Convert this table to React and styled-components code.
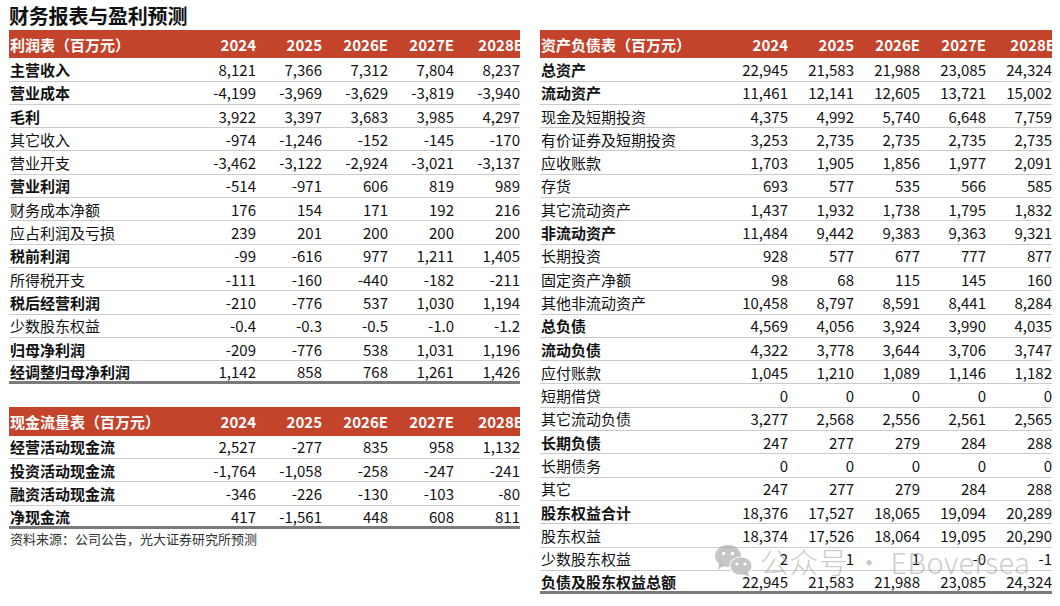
import React from "react";
import styled, { createGlobalStyle } from "styled-components";

const Global = createGlobalStyle`
  html, body { margin: 0; padding: 0; background: #fff; }
  body { font-family: "Noto Sans CJK SC", "Noto Sans", sans-serif; color: #111; }
`;

const Page = styled.div`
  position: relative;
  width: 1060px;
  height: 606px;
  box-sizing: border-box;
  padding: 3px 8px 0 9px;
  overflow: hidden;
`;

const Title = styled.h1`
  margin: 0;
  height: 27px;
  font-size: 20px;
  line-height: 26px;
  font-weight: 700;
  letter-spacing: -0.2px;
`;

const Columns = styled.div`
  display: flex;
  gap: 20px;
  align-items: flex-start;
`;

const Column = styled.div`
  display: flex;
  flex-direction: column;
  width: ${(p) => p.$w}px;
`;

const Table = styled.div`
  display: flex;
  flex-direction: column;
  margin-bottom: ${(p) => p.$mb || 0}px;
`;

const HeaderRow = styled.div`
  display: grid;
  grid-template-columns: 1fr repeat(5, 66px);
  height: 28.3px;
  align-items: center;
  background: #c4432b;
  color: #fff;
  font-weight: 700;
  font-size: 15px;
  overflow: hidden;
  white-space: nowrap;
`;

const HeadLabel = styled.div`
  padding-left: 1px;
`;

const HeadNum = styled.div`
  text-align: right;
  margin-right: ${(p) => (p.$last ? -3 : 0)}px;
`;

const Row = styled.div`
  display: grid;
  grid-template-columns: 1fr repeat(5, 66px);
  box-sizing: border-box;
  height: 23.3px;
  align-items: center;
  border-bottom: 1px solid #cbcbcb;
  font-size: 15px;
  white-space: nowrap;
  &:first-of-type { height: 25.7px; }
  &:last-child { border-bottom: 3px solid #7b7b7b; }
`;

const Label = styled.div`
  padding-left: 1px;
  font-weight: ${(p) => (p.$bold ? 700 : 400)};
`;

const Num = styled.div`
  text-align: right;
`;

const Note = styled.div`
  margin-top: 1px;
  font-size: 13px;
  line-height: 17px;
  color: #333;
  padding-left: 1px;
`;

const Watermark = styled.div`
  position: absolute;
  left: 714px;
  top: 543px;
  display: flex;
  align-items: center;
  gap: 6px;
  color: rgba(160, 160, 160, 0.55);
  font-size: 29px;
  line-height: 36px;
  pointer-events: none;
  white-space: nowrap;
`;

const WmText = styled.span`
  font-family: "Noto Sans CJK SC", "Noto Sans", sans-serif;
  font-weight: 300;
  letter-spacing: 0.3px;
`;

const profit = [
  ["主营收入", true, ["8,121", "7,366", "7,312", "7,804", "8,237"]],
  ["营业成本", true, ["-4,199", "-3,969", "-3,629", "-3,819", "-3,940"]],
  ["毛利", true, ["3,922", "3,397", "3,683", "3,985", "4,297"]],
  ["其它收入", false, ["-974", "-1,246", "-152", "-145", "-170"]],
  ["营业开支", false, ["-3,462", "-3,122", "-2,924", "-3,021", "-3,137"]],
  ["营业利润", true, ["-514", "-971", "606", "819", "989"]],
  ["财务成本净额", false, ["176", "154", "171", "192", "216"]],
  ["应占利润及亏损", false, ["239", "201", "200", "200", "200"]],
  ["税前利润", true, ["-99", "-616", "977", "1,211", "1,405"]],
  ["所得税开支", false, ["-111", "-160", "-440", "-182", "-211"]],
  ["税后经营利润", true, ["-210", "-776", "537", "1,030", "1,194"]],
  ["少数股东权益", false, ["-0.4", "-0.3", "-0.5", "-1.0", "-1.2"]],
  ["归母净利润", true, ["-209", "-776", "538", "1,031", "1,196"]],
  ["经调整归母净利润", true, ["1,142", "858", "768", "1,261", "1,426"]],
];

const cash = [
  ["经营活动现金流", true, ["2,527", "-277", "835", "958", "1,132"]],
  ["投资活动现金流", true, ["-1,764", "-1,058", "-258", "-247", "-241"]],
  ["融资活动现金流", true, ["-346", "-226", "-130", "-103", "-80"]],
  ["净现金流", true, ["417", "-1,561", "448", "608", "811"]],
];

const balance = [
  ["总资产", true, ["22,945", "21,583", "21,988", "23,085", "24,324"]],
  ["流动资产", true, ["11,461", "12,141", "12,605", "13,721", "15,002"]],
  ["现金及短期投资", false, ["4,375", "4,992", "5,740", "6,648", "7,759"]],
  ["有价证券及短期投资", false, ["3,253", "2,735", "2,735", "2,735", "2,735"]],
  ["应收账款", false, ["1,703", "1,905", "1,856", "1,977", "2,091"]],
  ["存货", false, ["693", "577", "535", "566", "585"]],
  ["其它流动资产", false, ["1,437", "1,932", "1,738", "1,795", "1,832"]],
  ["非流动资产", true, ["11,484", "9,442", "9,383", "9,363", "9,321"]],
  ["长期投资", false, ["928", "577", "677", "777", "877"]],
  ["固定资产净额", false, ["98", "68", "115", "145", "160"]],
  ["其他非流动资产", false, ["10,458", "8,797", "8,591", "8,441", "8,284"]],
  ["总负债", true, ["4,569", "4,056", "3,924", "3,990", "4,035"]],
  ["流动负债", true, ["4,322", "3,778", "3,644", "3,706", "3,747"]],
  ["应付账款", false, ["1,045", "1,210", "1,089", "1,146", "1,182"]],
  ["短期借贷", false, ["0", "0", "0", "0", "0"]],
  ["其它流动负债", false, ["3,277", "2,568", "2,556", "2,561", "2,565"]],
  ["长期负债", true, ["247", "277", "279", "284", "288"]],
  ["长期债务", false, ["0", "0", "0", "0", "0"]],
  ["其它", false, ["247", "277", "279", "284", "288"]],
  ["股东权益合计", true, ["18,376", "17,527", "18,065", "19,094", "20,289"]],
  ["股东权益", false, ["18,374", "17,526", "18,064", "19,095", "20,290"]],
  ["少数股东权益", false, ["2", "1", "1", "-0", "-1"]],
  ["负债及股东权益总额", true, ["22,945", "21,583", "21,988", "23,085", "24,324"]],
];

const years = ["2024", "2025", "2026E", "2027E", "2028E"];

function FinTable({ title, rows, mb }) {
  return (
    <Table $mb={mb}>
      <HeaderRow>
        <HeadLabel>{title}</HeadLabel>
        {years.map((y, i) => (
          <HeadNum key={y} $last={i === years.length - 1}>
            {y}
          </HeadNum>
        ))}
      </HeaderRow>
      {rows.map(([label, bold, vals]) => (
        <Row key={label + vals[0]}>
          <Label $bold={bold}>{label}</Label>
          {vals.map((v, i) => (
            <Num key={i}>{v}</Num>
          ))}
        </Row>
      ))}
    </Table>
  );
}

function WeChatIcon() {
  const c = "rgba(160,160,160,0.6)";
  return (
    <svg width="40" height="34" viewBox="0 0 40 34">
      <ellipse cx="14" cy="12" rx="13" ry="11" fill={c} />
      <path d="M5 20 L4 26 L10 21 Z" fill={c} />
      <circle cx="9.5" cy="9.5" r="1.8" fill="#fff" />
      <circle cx="18.5" cy="9.5" r="1.8" fill="#fff" />
      <ellipse cx="27" cy="22" rx="11.5" ry="9.5" fill="#fff" />
      <ellipse cx="27" cy="22" rx="10.5" ry="8.8" fill={c} />
      <path d="M33 28 L36 33 L29 30 Z" fill={c} />
      <circle cx="23" cy="20" r="1.6" fill="#fff" />
      <circle cx="31" cy="20" r="1.6" fill="#fff" />
    </svg>
  );
}

export default function App() {
  return (
    <>
      <Global />
      <Page>
        <Title>财务报表与盈利预测</Title>
        <Columns>
          <Column $w={511}>
            <FinTable title="利润表（百万元）" rows={profit} mb={23} />
            <FinTable title="现金流量表（百万元）" rows={cash} />
            <Note>资料来源：公司公告，光大证券研究所预测</Note>
          </Column>
          <Column $w={512}>
            <FinTable title="资产负债表（百万元）" rows={balance} />
          </Column>
        </Columns>
        <Watermark>
          <WeChatIcon />
          <WmText>公众号 · EBoversea</WmText>
        </Watermark>
      </Page>
    </>
  );
}
